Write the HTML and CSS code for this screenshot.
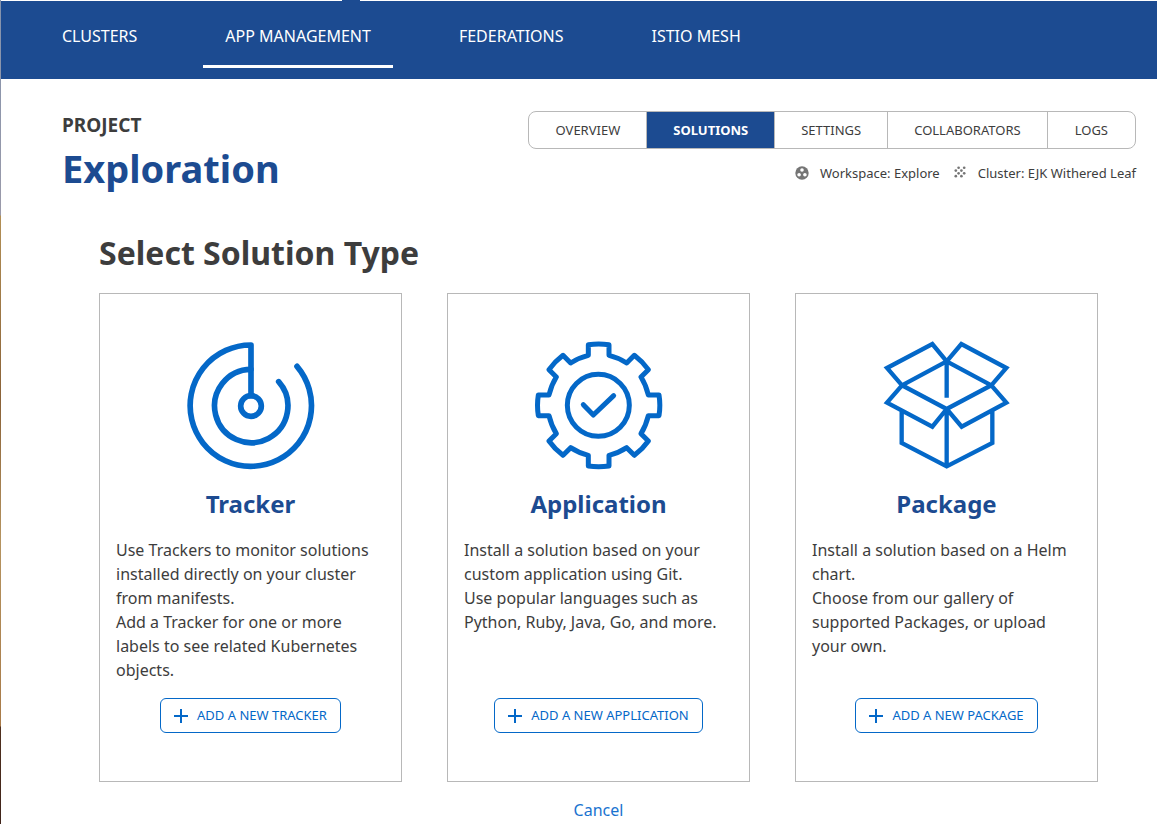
FILE: index.html
```html
<!DOCTYPE html>
<html lang="en">
<head>
<meta charset="utf-8">
<title>Select Solution Type</title>
<link rel="stylesheet" href="styles.css">
</head>
<body>
<header class="topbar">
  <nav class="topnav" aria-label="Main">
    <a class="topnav-link" href="#">CLUSTERS</a>
    <a class="topnav-link topnav-link-active" href="#" aria-current="page">APP MANAGEMENT</a>
    <a class="topnav-link" href="#">FEDERATIONS</a>
    <a class="topnav-link" href="#">ISTIO MESH</a>
  </nav>
</header>
<main class="page">
  <div class="project">
    <div class="project-title">
      <p class="eyebrow">PROJECT</p>
      <h1 class="project-name">Exploration</h1>
    </div>
    <div class="project-side">
      <nav class="tabs" aria-label="Project">
        <a class="tab" href="#">OVERVIEW</a>
        <a class="tab tab-active" href="#" aria-current="page">SOLUTIONS</a>
        <a class="tab" href="#">SETTINGS</a>
        <a class="tab" href="#">COLLABORATORS</a>
        <a class="tab" href="#">LOGS</a>
      </nav>
      <div class="meta">
        <span class="meta-item">
          <svg class="meta-icon" viewBox="0 0 14 14" aria-hidden="true"><circle cx="7" cy="7" r="6.7" fill="#757575"/><g fill="#fff"><circle cx="7" cy="4" r="1.8"/><circle cx="4.1" cy="8.8" r="1.8"/><circle cx="9.9" cy="8.8" r="1.8"/></g></svg>
          Workspace: Explore
        </span>
        <span class="meta-item">
          <svg class="meta-icon" viewBox="2 2 20 20" aria-hidden="true"><g fill="#757575"><circle cx="10" cy="4.5" r="1.9"/><circle cx="18" cy="4.5" r="1.9"/><circle cx="6" cy="8.5" r="1.9"/><circle cx="14" cy="8.5" r="1.9"/><circle cx="10" cy="12.5" r="1.9"/><circle cx="18" cy="12.5" r="1.9"/><circle cx="6" cy="16.5" r="1.9"/><circle cx="14" cy="16.5" r="1.9"/></g></svg>
          Cluster: EJK Withered Leaf
        </span>
      </div>
    </div>
  </div>

  <section class="solutions">
    <h2 class="solutions-title">Select Solution Type</h2>
    <div class="cards">
      <article class="card">
        <svg class="card-icon" viewBox="47 34 390 390" stroke-width="17" stroke-linecap="round" stroke-linejoin="round" aria-hidden="true">
          <circle cx="242" cy="229" r="31"/>
          <path d="M242 198V46A182 182 0 1 0 380 110"/>
          <path d="M242 119A110 110 0 1 0 325 156"/>
        </svg>
        <h3 class="card-title">Tracker</h3>
        <div class="card-text">
          <p>Use Trackers to monitor solutions installed directly on your cluster from manifests.</p>
          <p>Add a Tracker for one or more labels to see related Kubernetes objects.</p>
        </div>
        <button class="add" type="button"><svg class="add-icon" viewBox="0 0 14 14" aria-hidden="true"><path d="M7 0V14M0 7H14"/></svg>ADD A NEW TRACKER</button>
      </article>
      <article class="card">
        <svg class="card-icon" viewBox="42 34 390 390" stroke-width="15" stroke-linecap="round" stroke-linejoin="round" aria-hidden="true">
          <path d="M205 45Q236 41 267 45V77Q296 84 320 100L343 77Q368 96 385 120L363 142Q378 166 385 196H417Q422 227 417 258H385Q378 288 363 312L385 334Q368 358 343 377L320 354Q296 370 267 377V409Q236 413 205 409V377Q176 370 152 354L129 377Q104 358 87 334L109 312Q94 288 87 258H55Q50 227 55 196H87Q94 166 109 142L87 120Q104 96 129 77L152 100Q176 84 205 77Z"/>
          <circle cx="235" cy="227" r="93"/>
          <path d="M190 225L220 256L281 198"/>
        </svg>
        <h3 class="card-title">Application</h3>
        <div class="card-text">
          <p>Install a solution based on your custom application using Git.</p>
          <p>Use popular languages such as Python, Ruby, Java, Go, and more.</p>
        </div>
        <button class="add" type="button"><svg class="add-icon" viewBox="0 0 14 14" aria-hidden="true"><path d="M7 0V14M0 7H14"/></svg>ADD A NEW APPLICATION</button>
      </article>
      <article class="card">
        <svg class="card-icon" viewBox="48 34 390 390" stroke-width="13" aria-hidden="true">
          <path d="M242 95L199 43L63 115L108 167ZM242 95L286 43L421 115L376 167ZM108 167L63 219L199 291L242 238ZM376 167L421 219L287 291L242 238ZM242 95V204M242 238V410M107 242V340L242 410L379 340V242"/>
        </svg>
        <h3 class="card-title">Package</h3>
        <div class="card-text">
          <p>Install a solution based on a Helm chart.</p>
          <p>Choose from our gallery of supported Packages, or upload your own.</p>
        </div>
        <button class="add" type="button"><svg class="add-icon" viewBox="0 0 14 14" aria-hidden="true"><path d="M7 0V14M0 7H14"/></svg>ADD A NEW PACKAGE</button>
      </article>
    </div>
    <a class="cancel" href="#">Cancel</a>
  </section>
</main>
</body>
</html>
```
FILE: styles.css
```css
* {
  box-sizing: border-box;
}

html {
  background: #fff;
}

body {
  min-height: 100vh;
  margin: 0;
  padding: 1px 0 0 1px;
  background: linear-gradient(#8493ad 0, #9a9aaa 215px, #b28f55 216px, #8a6238 400px, #b5935f 540px, #a87a48 726px, #50301f 727px, #3f241a) left top / 1px 100% no-repeat;
  color: #3d3d3d;
  font-family: "Noto Sans", sans-serif;
  font-size: 16px;
  line-height: 24px;
}

h1, h2, h3, p {
  margin: 0;
}

a {
  color: inherit;
  text-decoration: none;
}

.topbar {
  position: relative;
  height: 78px;
  padding: 0 39px;
  background: #1c4b91;
  color: #fff;
}

.topbar::before {
  content: "";
  position: absolute;
  top: -1px;
  left: 341px;
  width: 18px;
  height: 1px;
  background: #1c4b91;
}

.topnav {
  display: flex;
  gap: 44px;
}

.topnav-link {
  padding: 23px 22px 17px;
  border-bottom: 3px solid transparent;
}

.topnav-link-active {
  border-bottom-color: #fff;
}

.page {
  padding: 32px 21px 0 61px;
}

.project {
  display: flex;
  justify-content: space-between;
}

.eyebrow {
  padding-top: 2px;
  font-size: 19px;
  font-weight: 700;
}

.project-name {
  padding-top: 7px;
  color: #1c4b91;
  font-size: 38px;
  line-height: 48px;
}

.tabs {
  display: flex;
  overflow: hidden;
  border: 1px solid #b8b8b8;
  border-radius: 8px;
}

.tab {
  padding: 6px 26px 6px 27px;
  font-size: 13px;
}

.tab + .tab {
  padding-left: 26px;
  border-left: 1px solid #b8b8b8;
}

.tab:last-child {
  padding: 6px 27px;
}

.tab-active {
  background: #1c4b91;
  color: #fff;
  font-weight: 700;
}

.meta {
  display: flex;
  justify-content: flex-end;
  gap: 13px;
  padding-top: 12px;
  font-size: 13px;
}

.meta-item {
  display: flex;
  align-items: center;
  gap: 11px;
}

.meta-icon {
  width: 14px;
  height: 14px;
}

.solutions {
  display: flex;
  flex-direction: column;
  padding: 37px 38px 0 37px;
}

.solutions-title {
  font-size: 32px;
  line-height: 48px;
}

.cards {
  display: grid;
  grid-template-columns: repeat(3, 1fr);
  gap: 45px;
  padding-top: 16px;
}

.card {
  display: flex;
  flex-direction: column;
  align-items: center;
  padding: 47px 16px 48px;
  border: 1px solid #b8b8b8;
}

.card-icon {
  width: 130px;
  height: 130px;
  fill: none;
  stroke: #0468c8;
}

.card-title {
  padding-top: 17px;
  color: #1c4b91;
  font-size: 24px;
  line-height: 32px;
}

.card-text {
  flex: 1;
  align-self: stretch;
  padding: 18px 0 16px;
}

.add {
  display: flex;
  align-items: center;
  gap: 9px;
  padding: 5px 13px;
  border: 1px solid #0468c8;
  border-radius: 6px;
  background: #fff;
  color: #0468c8;
  font: 13px/23px "Noto Sans", sans-serif;
}

.add-icon {
  width: 14px;
  height: 14px;
  fill: none;
  stroke: #0468c8;
  stroke-width: 2;
}

.cancel {
  align-self: center;
  padding-top: 16px;
  color: #1a73d0;
}
```
